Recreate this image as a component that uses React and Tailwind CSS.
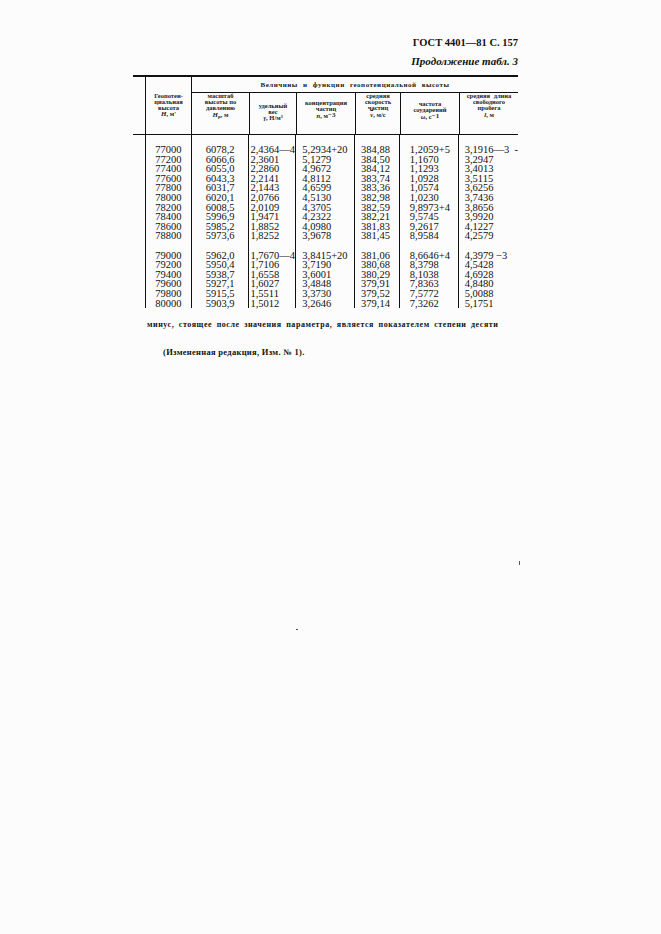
import React from "react";

const g1 = [
  ["77000", "6078,2", "2,4364—4", "5,2934+20", "384,88", "1,2059+5", "3,1916—3  -"],
  ["77200", "6066,6", "2,3601", "5,1279", "384,50", "1,1670", "3,2947"],
  ["77400", "6055,0", "2,2860", "4,9672", "384,12", "1,1293", "3,4013"],
  ["77600", "6043,3", "2,2141", "4,8112", "383,74", "1,0928", "3,5115"],
  ["77800", "6031,7", "2,1443", "4,6599", "383,36", "1,0574", "3,6256"],
  ["78000", "6020,1", "2,0766", "4,5130", "382,98", "1,0230", "3,7436"],
  ["78200", "6008,5", "2,0109", "4,3705", "382,59", "9,8973+4", "3,8656"],
  ["78400", "5996,9", "1,9471", "4,2322", "382,21", "9,5745", "3,9920"],
  ["78600", "5985,2", "1,8852", "4,0980", "381,83", "9,2617", "4,1227"],
  ["78800", "5973,6", "1,8252", "3,9678", "381,45", "8,9584", "4,2579"],
];
const g2 = [
  ["79000", "5962,0", "1,7670—4", "3,8415+20", "381,06", "8,6646+4", "4,3979 −3"],
  ["79200", "5950,4", "1,7106", "3,7190", "380,68", "8,3798", "4,5428"],
  ["79400", "5938,7", "1,6558", "3,6001", "380,29", "8,1038", "4,6928"],
  ["79600", "5927,1", "1,6027", "3,4848", "379,91", "7,8363", "4,8480"],
  ["79800", "5915,5", "1,5511", "3,3730", "379,52", "7,5772", "5,0088"],
  ["80000", "5903,9", "1,5012", "3,2646", "379,14", "7,3262", "5,1751"],
];

const rows = [...g1, null, ...g2];

const colDefs = [
  "w-[46px] border-l border-[#111] items-center",
  "w-[58px] border-l border-[#111] items-center",
  "w-[47px] border-l border-[#111] items-start pl-[1px]",
  "w-[59px] border-l border-[#111] items-start pl-[6px]",
  "w-[45px] border-l border-[#111] items-start pl-[6px]",
  "w-[59px] border-l border-[#111] items-start pl-[10px]",
  "flex-1 border-l border-[#111] items-start pl-[6px]",
];

function DataCol({ idx }) {
  return (
    <div className={"flex flex-col pt-[10px] " + colDefs[idx]}>
      {rows.map((r, i) => (
        <div key={i} className="h-[9.6px] leading-[9.6px] whitespace-pre">
          {r ? r[idx] : "\u00a0"}
        </div>
      ))}
    </div>
  );
}

export default function App() {
  return (
    <div className="w-[661px] h-[934px] bg-[#fcfcfc] text-[#111] font-['Liberation_Serif',serif] relative">
      <div className="ml-[133px] w-[385px] pt-[37px]">
        <div className="text-right text-[10.5px] leading-[12px] font-bold">ГОСТ 4401—81 С. 157</div>
        <div className="mt-[6px] text-right text-[11px] leading-[13px] italic font-bold">Продолжение табл. 3</div>

        {/* header */}
        <div className="mt-[7px] flex h-[60px] border-t-2 border-b-[1.5px] border-[#111] text-[6.5px] leading-[6px] font-bold text-[#222]">
          <div className="w-[12px]" />
          <div className="w-[46px] border-l border-[#111] flex flex-col items-center justify-center text-center pb-[1px]">
            <div>Геопотен-</div>
            <div>циальная</div>
            <div>высота</div>
            <div className="mt-[0.5px]"><i className="text-[7px]">H</i>, м'</div>
          </div>
          <div className="flex-1 border-l border-[#111] flex flex-col">
            <div className="h-[16px] border-b border-[#111] flex items-center justify-center text-[7px] tracking-[0.5px] [word-spacing:3px]">
              Величины и функции геопотенциальной высоты
            </div>
            <div className="flex flex-1">
              <div className="w-[57px] flex flex-col items-center text-center pt-[0px]">
                <div>масштаб</div>
                <div>высоты по</div>
                <div>давлению</div>
                <div className="mt-[1px]"><i className="text-[7px]">H</i><sub className="text-[5px]">p</sub>, м</div>
              </div>
              <div className="w-[47px] border-l border-[#111] flex flex-col items-center text-center pt-[10px]">
                <div>удельный</div>
                <div>вес</div>
                <div><i>γ</i>, Н/м³</div>
              </div>
              <div className="w-[59px] border-l border-[#111] flex flex-col items-center text-center pt-[7px]">
                <div>концентрация</div>
                <div>частиц</div>
                <div className="mt-[1px]"><i>n</i>, м<sup className="text-[7px] relative -top-[1px]">−3</sup></div>
              </div>
              <div className="w-[45px] border-l border-[#111] flex flex-col items-center text-center pt-[0px]">
                <div>средняя</div>
                <div>скорость</div>
                <div>частиц</div>
                <div className="mt-[1px]"><i className="overline">v</i>, м/с</div>
              </div>
              <div className="w-[59px] border-l border-[#111] flex flex-col items-center text-center pt-[8px]">
                <div>частота</div>
                <div>соударений</div>
                <div className="mt-[1px]"><i>ω</i>, с<sup className="text-[7px] relative -top-[1px]">−1</sup></div>
              </div>
              <div className="flex-1 border-l border-[#111] flex flex-col items-center text-center pt-[0px]">
                <div className="[word-spacing:2px]">средняя длина</div>
                <div>свободного</div>
                <div>пробега</div>
                <div className="mt-[0.5px]"><i className="text-[7px]">l</i>, м</div>
              </div>
            </div>
          </div>
        </div>

        {/* data */}
        <div className="flex text-[10.5px]">
          <div className="w-[12px]" />
          {[0, 1, 2, 3, 4, 5, 6].map((i) => (
            <DataCol key={i} idx={i} />
          ))}
        </div>

        <div className="mt-[12px] ml-[14px] text-[8px] leading-[10px] font-bold tracking-[0.55px] [word-spacing:2px] whitespace-nowrap">
          минус, стоящее после значения параметра, является показателем степени десяти
        </div>
        <div className="mt-[17px] ml-[30px] text-[8.5px] leading-[10px] font-bold tracking-[0.3px]">
          (Измененная редакция, Изм. № 1).
        </div>
      </div>

      <div className="absolute left-[519px] top-[561px] w-[1px] h-[4px] bg-[#555]" />
      <div className="absolute left-[296px] top-[629px] w-[2px] h-[1px] bg-[#555]" />
    </div>
  );
}
